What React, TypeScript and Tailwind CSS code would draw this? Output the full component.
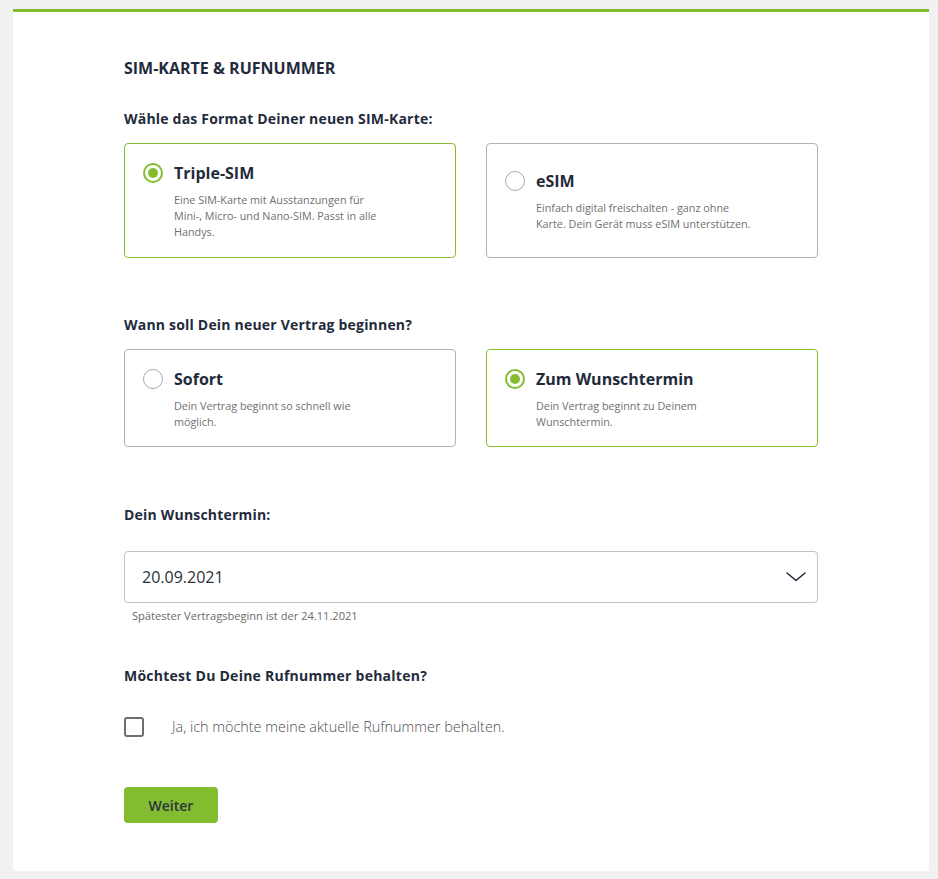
import React from "react";

const GREEN = "#84bc2f";

function Radio({ checked }: { checked: boolean }) {
  return checked ? (
    <span className="flex h-[20px] w-[20px] shrink-0 items-center justify-center rounded-full border-2 border-[#84bc2f] bg-white">
      <span className="h-[10px] w-[10px] rounded-full bg-[#84bc2f]" />
    </span>
  ) : (
    <span className="h-[20px] w-[20px] shrink-0 rounded-full border-[1.5px] border-[#a8a8a8] bg-white" />
  );
}

function OptionCard({
  checked,
  title,
  lines,
}: {
  checked: boolean;
  title: string;
  lines: string[];
}) {
  return (
    <div
      className={`flex flex-col justify-center rounded-[4px] border bg-white py-4 pl-[18px] pr-4 ${
        checked ? "border-[#84bc2f]" : "border-[#b3b3b3]"
      }`}
    >
      <div className="flex items-center gap-[11px]">
        <Radio checked={checked} />
        <span className="text-[16px] font-bold leading-[24px] text-[#1f2b3c]">{title}</span>
      </div>
      <div className="mt-[7px] pl-[31px] text-[10.8px] leading-[16px] text-[#707070]">
        {lines.map((l, i) => (
          <div key={i}>{l}</div>
        ))}
      </div>
    </div>
  );
}

export default function App() {
  return (
    <div
      className="min-h-[879px] bg-[#f1f1f1] pt-[9px]"
      style={{ fontFamily: '"Open Sans", "Noto Sans", sans-serif' }}
    >
      <div className="ml-[13px] w-[916px] border-t-[3px] border-[#84bc2f] bg-white pb-[48px] pl-[111px] pt-[46px]">
        <div className="w-[694px]">
          <h1 className="text-[16px] font-bold leading-[20px] text-[#1f2b3c]">SIM-KARTE &amp; RUFNUMMER</h1>

          <h2 className="mt-[31px] text-[14px] font-bold leading-[20px] tracking-[0.2px] text-[#1f2b3c]">
            Wähle das Format Deiner neuen SIM-Karte:
          </h2>
          <div className="mt-[14px] grid h-[115px] grid-cols-2 gap-[30px]">
            <OptionCard
              checked
              title="Triple-SIM"
              lines={["Eine SIM-Karte mit Ausstanzungen für", "Mini-, Micro- und Nano-SIM. Passt in alle", "Handys."]}
            />
            <OptionCard
              checked={false}
              title="eSIM"
              lines={["Einfach digital freischalten - ganz ohne", "Karte. Dein Gerät muss eSIM unterstützen."]}
            />
          </div>

          <h2 className="mt-[57px] text-[14px] font-bold leading-[20px] tracking-[0.2px] text-[#1f2b3c]">
            Wann soll Dein neuer Vertrag beginnen?
          </h2>
          <div className="mt-[14px] grid h-[98px] grid-cols-2 gap-[30px]">
            <OptionCard checked={false} title="Sofort" lines={["Dein Vertrag beginnt so schnell wie", "möglich."]} />
            <OptionCard checked title="Zum Wunschtermin" lines={["Dein Vertrag beginnt zu Deinem", "Wunschtermin."]} />
          </div>

          <h2 className="mt-[58px] text-[14px] font-bold leading-[20px] tracking-[0.2px] text-[#1f2b3c]">
            Dein Wunschtermin:
          </h2>
          <div className="mt-[26px] flex h-[52px] items-center justify-between rounded-[4px] border border-[#c2c2c2] bg-white pl-[17px] pr-[11px]">
            <span className="text-[16px] leading-[22px] text-[#2a2f38]">20.09.2021</span>
            <svg width="20" height="10" viewBox="0 0 20 10" fill="none">
              <path d="M1 1 L10 8.5 L19 1" stroke="#1f2b3c" strokeWidth="1.6" strokeLinecap="round" strokeLinejoin="round" />
            </svg>
          </div>
          <div className="mt-[5px] pl-[8px] text-[11.1px] leading-[16px] text-[#6a6a6a]">
            Spätester Vertragsbeginn ist der 24.11.2021
          </div>

          <h2 className="mt-[42px] text-[14px] font-bold leading-[20px] tracking-[0.25px] text-[#1f2b3c]">
            Möchtest Du Deine Rufnummer behalten?
          </h2>
          <label className="mt-[31px] flex items-center">
            <span className="h-[20px] w-[20px] shrink-0 rounded-[3px] border-2 border-[#6e6e6e] bg-white" />
            <span className="ml-[28px] text-[14.4px] font-light leading-[20px] text-[#4a4f57]">
              Ja, ich möchte meine aktuelle Rufnummer behalten.
            </span>
          </label>

          <button
            className="mt-[50px] flex h-[36px] w-[94px] items-center justify-center rounded-[4px] text-[14px] font-semibold text-[#2b3440]"
            style={{ backgroundColor: GREEN }}
          >
            Weiter
          </button>
        </div>
      </div>
    </div>
  );
}
